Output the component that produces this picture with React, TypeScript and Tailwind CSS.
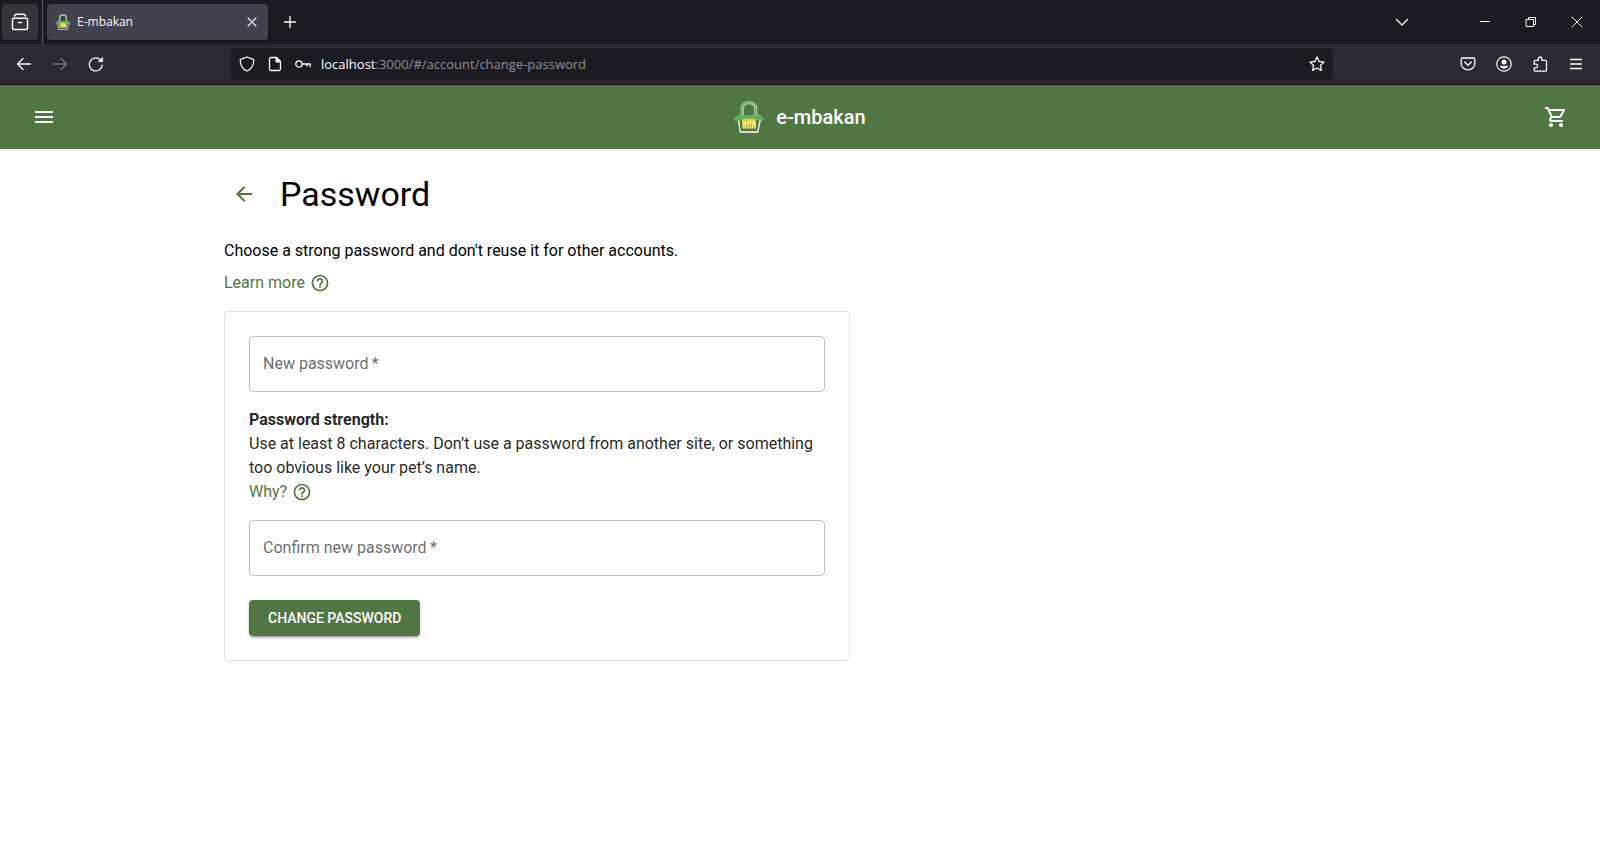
import { useId } from "react";
import type { ReactNode } from "react";
import { MdArrowBack, MdHelpOutline, MdMenu, MdOutlineShoppingCart } from "react-icons/md";

function Glyph({ children, className }: { children: ReactNode; className?: string }) {
  return (
    <svg
      viewBox="0 0 16 16"
      fill="none"
      stroke="currentColor"
      strokeWidth="1.3"
      strokeLinecap="round"
      strokeLinejoin="round"
      aria-hidden="true"
      className={className ?? "size-4"}
    >
      {children}
    </svg>
  );
}

function BagLogo({ className }: { className: string }) {
  return (
    <svg viewBox="0 0 30 32" fill="none" aria-hidden="true" className={className}>
      <path d="M8.200 15V8C8.200 4.200 11 1.800 15 1.800S21.800 4.200 21.800 8v7" stroke="#cfe6c8" strokeWidth="3" />
      <path d="M8.200 15V8C8.200 4.200 11 1.800 15 1.800S21.800 4.200 21.800 8v7" stroke="#62ad56" strokeWidth="1.500" />
      <path d="M4.400 18l1.800 13h17.600L26.400 18" stroke="#ffffff" strokeWidth="1.300" />
      <rect x="8.300" y="17" width="13.700" height="10.500" fill="#f5e873" />
      <path d="M8.300 17H22v4c-2.500-1-3.500 0-5-1.200-1.600 1.200-3 .2-4.500 1.200-1.500-.6-2.700 0-4.200 1.400z" fill="#f0cf3e" />
      <path d="M10 27v-3m2.500 3v-4.500m2.500 4.500v-5m2.500 5v-4.500m2.500 4.500v-3" stroke="#8fb04a" strokeWidth="0.900" />
      <path
        d="M.4 18.800C2.200 14.600 5 13 9 14.200c4 .9 8 .9 12 0 4-1.200 6.800.4 8.600 4.600-2.400 1-5.200 1.200-7.400-.3-4.400-1-10-1-14.400 0-2.200 1.500-5 1.300-7.400.3z"
        fill="#62ad56"
        stroke="#8cc682"
        strokeWidth="0.600"
      />
    </svg>
  );
}

function TabStrip() {
  return (
    <div className="flex h-11 items-center bg-[#1c1b22] text-[#fbfbfe]">
      <button type="button" aria-label="Recent browsing" className="ml-0.5 grid size-9 place-items-center rounded bg-[#35343a]">
        <Glyph className="size-5">
          <path
            d="M3.600 3.200c.2-1 .7-1.500 1.700-1.500h5.400c1 0 1.500.5 1.700 1.500M3 5h10c.6 0 1 .4 1 1v6.500c0 .9-.6 1.500-1.500 1.500h-9c-.9 0-1.500-.6-1.500-1.500V6c0-.6.400-1 1-1zM6.800 8.400h2.400"
            strokeWidth="1.200"
          />
        </Glyph>
      </button>
      <div className="ml-1 h-full w-px bg-[#5b5a61]" />
      <div className="ml-1 flex h-9 w-[221px] items-center rounded bg-[#42414d] pr-2 pl-2 shadow">
        <BagLogo className="size-4" />
        <span className="ml-1.5 flex-1 font-['Open_Sans',sans-serif] text-xs">E-mbakan</span>
        <button type="button" aria-label="Close tab" className="grid size-4 place-items-center">
          <Glyph className="size-4">
            <path d="M4 4l8 8M12 4l-8 8" strokeWidth="1.100" />
          </Glyph>
        </button>
      </div>
      <button type="button" aria-label="New tab" className="ml-3 grid size-5 place-items-center">
        <Glyph>
          <path d="M8 2.500v11M2.500 8h11" />
        </Glyph>
      </button>
      <div className="ml-auto flex items-center">
        <button type="button" aria-label="List all tabs" className="mr-11 grid size-8 place-items-center">
          <Glyph>
            <path d="M2.500 5.500L8 11l5.500-5.500" />
          </Glyph>
        </button>
        <button type="button" aria-label="Minimize" className="grid h-8 w-[46px] place-items-center">
          <Glyph>
            <path d="M3 7.500h10" strokeWidth="1" strokeLinecap="butt" />
          </Glyph>
        </button>
        <button type="button" aria-label="Restore" className="grid h-8 w-[46px] place-items-center">
          <Glyph>
            <path d="M3.500 5.500h7v7h-7zM5.500 5.500v-2h7v7h-2" strokeWidth="1" strokeLinejoin="miter" />
          </Glyph>
        </button>
        <button type="button" aria-label="Close" className="grid h-8 w-[46px] place-items-center">
          <Glyph>
            <path d="M3 3l10 10M13 3L3 13" strokeWidth="1" />
          </Glyph>
        </button>
      </div>
    </div>
  );
}

function NavBar() {
  return (
    <div className="flex h-[41px] items-center border-b border-[#0c0c0d] bg-[#2b2a33] text-[#fbfbfe]">
      <div className="flex w-[231px] shrink-0 items-center gap-5 pl-4">
        <button type="button" aria-label="Back">
          <Glyph>
            <path d="M14.500 8h-13M7 2.500L1.500 8 7 13.500" />
          </Glyph>
        </button>
        <button type="button" aria-label="Forward" className="text-[#77767d]">
          <Glyph>
            <path d="M1.500 8h13M9 2.500L14.500 8 9 13.500" />
          </Glyph>
        </button>
        <button type="button" aria-label="Reload">
          <Glyph>
            <path d="M14.300 9.200A6.500 6.500 0 1 1 12.600 4" />
            <path d="M14.700 1.500v4.200h-4.200z" fill="currentColor" strokeWidth="0.600" />
          </Glyph>
        </button>
      </div>
      <div className="flex h-8 min-w-0 flex-1 items-center rounded bg-[#1c1b22] pr-2 pl-2">
        <Glyph>
          <path d="M8 1L14.200 3.300c.4.100.6.500.6.900C14.700 9 12.500 13 8 15 3.500 13 1.300 9 1.200 4.200c0-.4.200-.8.600-.9z" />
        </Glyph>
        <Glyph className="ml-3 size-4">
          <path d="M9.500 1.500H4c-.8 0-1.500.7-1.500 1.500v10c0 .8.700 1.500 1.500 1.500h8c.8 0 1.500-.7 1.500-1.500V5.500z" />
          <path d="M9.200 1.500v4.300h4.300z" fill="currentColor" />
        </Glyph>
        <Glyph className="ml-3 size-4">
          <circle cx="4" cy="8" r="3.200" />
          <path d="M7.200 8h8v2.500M12 8v2" />
        </Glyph>
        <a
          href="#/account/change-password"
          className="ml-2.5 flex-1 truncate font-['Open_Sans',sans-serif] text-[13px] leading-5 text-[#8f8e94]"
        >
          <span className="text-[#fbfbfe]">localhost</span>:3000/#/account/change-password
        </a>
        <button type="button" aria-label="Bookmark this page">
          <Glyph>
            <path d="M8 1l2.100 4.500 4.900.6-3.600 3.400 1 4.900L8 12l-4.400 2.400 1-4.900L1 6.100l4.900-.6z" />
          </Glyph>
        </button>
      </div>
      <div className="flex w-[267px] shrink-0 items-center justify-end gap-5 pr-4">
        <button type="button" aria-label="Save to Pocket">
          <Glyph>
            <path d="M2.500 2h11c.8 0 1.300.5 1.300 1.300v4.200a6.800 6.300 0 0 1-13.600 0V3.300C1.200 2.500 1.700 2 2.500 2zM4.700 6L8 9.200 11.300 6" />
          </Glyph>
        </button>
        <button type="button" aria-label="Account">
          <Glyph>
            <circle cx="8" cy="8" r="7.200" strokeWidth="1.200" />
            <circle cx="8" cy="6" r="2.500" fill="currentColor" stroke="none" />
            <path d="M3.800 9.800h8.400c-.6 1.700-2.200 2.900-4.200 2.900s-3.600-1.200-4.200-2.900z" fill="currentColor" stroke="none" />
          </Glyph>
        </button>
        <button type="button" aria-label="Extensions">
          <Glyph>
            <path d="M2.200 7.200V5.400c0-.6.400-1 1-1h3.200V2.700a1.700 1.700 0 0 1 3.400 0v1.700h3.700c.6 0 1 .4 1 1v8.800c0 .6-.4 1-1 1H3.200c-.6 0-1-.4-1-1v-2.400h1.600a1.700 1.700 0 0 0 0-3.600H2.200z" />
          </Glyph>
        </button>
        <button type="button" aria-label="Open application menu">
          <Glyph>
            <path d="M2.500 3.500h11M2.500 8h11M2.500 12.500h11" />
          </Glyph>
        </button>
      </div>
    </div>
  );
}

function AppHeader() {
  return (
    <header className="flex h-16 items-center justify-between bg-[#527643] px-6 text-white">
      <button type="button" aria-label="Open menu" className="p-2">
        <MdMenu className="size-6" />
      </button>
      <a href="#/" className="flex items-center gap-3">
        <BagLogo className="h-8 w-[30px]" />
        <span className="text-xl font-medium">e-mbakan</span>
      </a>
      <button type="button" aria-label="Cart" className="p-2">
        <MdOutlineShoppingCart className="size-6" />
      </button>
    </header>
  );
}

function PasswordField({ label }: { label: string }) {
  const id = useId();
  return (
    <div className="grid items-center">
      <input
        id={id}
        type="password"
        required
        placeholder=" "
        className="peer col-start-1 row-start-1 h-14 w-full rounded border border-black/25 px-3.5 text-base outline-none focus:border-[#527643]"
      />
      <label
        htmlFor={id}
        className="pointer-events-none col-start-1 row-start-1 justify-self-start px-3.5 text-black/60 peer-focus:invisible peer-[:not(:placeholder-shown)]:invisible"
      >
        {label}&thinsp;*
      </label>
    </div>
  );
}

function HelpLink({ children }: { children: ReactNode }) {
  return (
    <a href="#/help" className="flex h-6 items-center gap-[5px] self-start text-[#527643]">
      {children}
      <MdHelpOutline className="size-5" />
    </a>
  );
}

export default function App() {
  return (
    <div className="min-h-screen bg-white font-[Roboto,sans-serif] text-base text-black">
      <TabStrip />
      <NavBar />
      <AppHeader />
      <main className="mx-auto flex max-w-[1200px] flex-col px-6 pt-6">
        <div className="flex items-center gap-4">
          <a href="#/account" aria-label="Back to account" className="p-2 text-[#527643]">
            <MdArrowBack className="size-6" />
          </a>
          <h1 className="text-[34px] leading-[42px]">Password</h1>
        </div>
        <p className="mt-6 mb-2">Choose a strong password and don't reuse it for other accounts.</p>
        <HelpLink>Learn more</HelpLink>
        <form
          onSubmit={(event) => event.preventDefault()}
          className="mt-4 flex max-w-[626px] flex-col rounded border border-black/12 p-6 text-black/87"
        >
          <PasswordField label="New password" />
          <div className="my-4 flex flex-col">
            <strong className="font-bold">Password strength:</strong>
            <p>
              Use at least 8 characters. Don’t use a password from another site, or something too obvious like your
              pet’s name.
            </p>
            <HelpLink>Why?</HelpLink>
          </div>
          <PasswordField label="Confirm new password" />
          <button
            type="submit"
            className="mt-6 h-9 self-start rounded bg-[#527643] px-[19px] text-sm font-medium text-white uppercase shadow-[0_3px_1px_-2px_rgba(0,0,0,0.2),0_2px_2px_0_rgba(0,0,0,0.14),0_1px_5px_0_rgba(0,0,0,0.12)]"
          >
            Change password
          </button>
        </form>
      </main>
    </div>
  );
}
